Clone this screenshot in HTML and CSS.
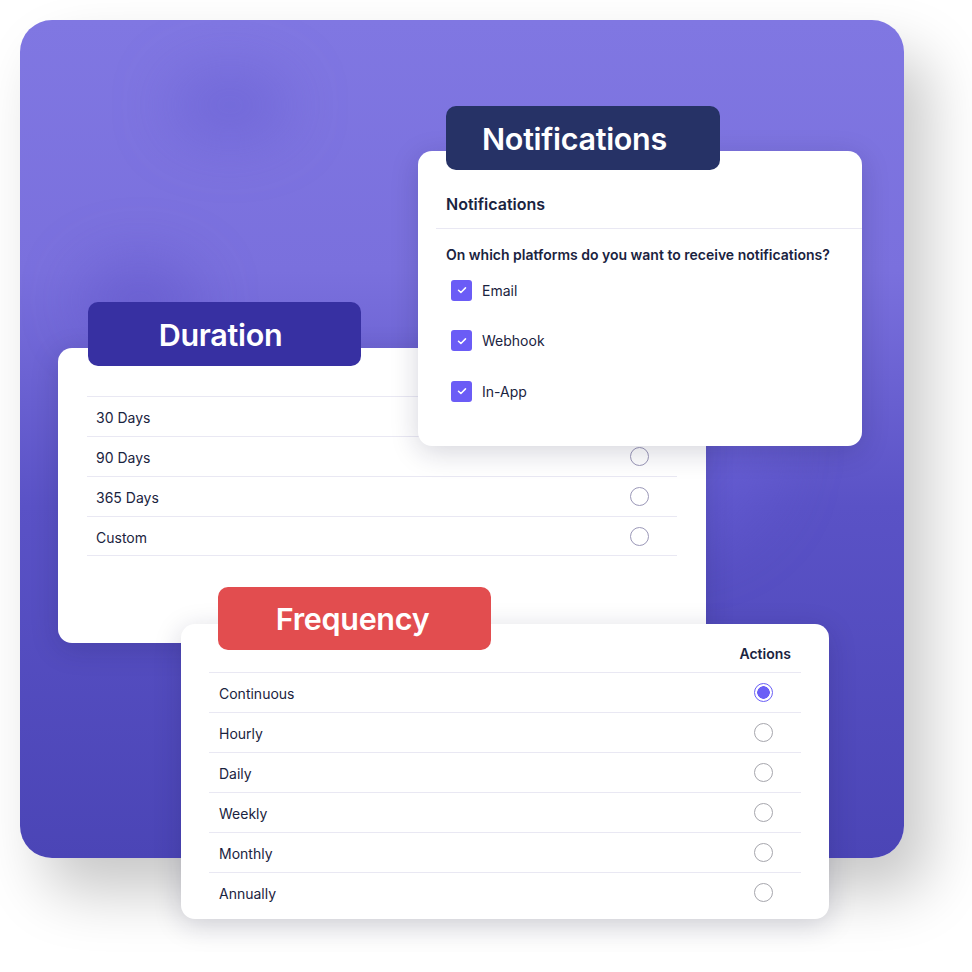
FILE: index.html
```html
<!DOCTYPE html>
<html>
<head>
<meta charset="utf-8">
<link rel="stylesheet" href="styles.css">
</head>
<body>
<div class="canvas">
  <div class="panel">
    <div class="blob b1"></div>
    <div class="blob b2"></div>
    <div class="blob b3"></div>
  </div>

  <div class="card card-duration">
    <div class="table">
      <div class="row"><span>30 Days</span><span class="radio"></span></div>
      <div class="row"><span>90 Days</span><span class="radio"></span></div>
      <div class="row"><span>365 Days</span><span class="radio"></span></div>
      <div class="row"><span>Custom</span><span class="radio"></span></div>
    </div>
  </div>
  <div class="tag tag-duration">Duration</div>

  <div class="card card-notif">
    <div class="notif-head">Notifications</div>
    <div class="notif-body">
      <div class="question">On which platforms do you want to receive notifications?</div>
      <div class="check-row"><span class="check"><svg viewBox="0 0 20 20" width="20" height="20"><path d="M6.5 10.2l2.4 2.3 4.6-4.6" fill="none" stroke="#fff" stroke-width="1.5" stroke-linecap="round" stroke-linejoin="round"/></svg></span><span>Email</span></div>
      <div class="check-row"><span class="check"><svg viewBox="0 0 20 20" width="20" height="20"><path d="M6.5 10.2l2.4 2.3 4.6-4.6" fill="none" stroke="#fff" stroke-width="1.5" stroke-linecap="round" stroke-linejoin="round"/></svg></span><span>Webhook</span></div>
      <div class="check-row"><span class="check"><svg viewBox="0 0 20 20" width="20" height="20"><path d="M6.5 10.2l2.4 2.3 4.6-4.6" fill="none" stroke="#fff" stroke-width="1.5" stroke-linecap="round" stroke-linejoin="round"/></svg></span><span>In-App</span></div>
    </div>
  </div>
  <div class="tag tag-notif">Notifications</div>

  <div class="card card-freq">
    <div class="table">
      <div class="thead"><span>Actions</span></div>
      <div class="row"><span>Continuous</span><span class="radio on"></span></div>
      <div class="row"><span>Hourly</span><span class="radio grey"></span></div>
      <div class="row"><span>Daily</span><span class="radio grey"></span></div>
      <div class="row"><span>Weekly</span><span class="radio grey"></span></div>
      <div class="row"><span>Monthly</span><span class="radio grey"></span></div>
      <div class="row"><span>Annually</span><span class="radio grey"></span></div>
    </div>
  </div>
  <div class="tag tag-freq">Frequency</div>
</div>
</body>
</html>
```

FILE: styles.css
```css
* { box-sizing: border-box; }
html, body { margin: 0; padding: 0; background: #fff; }
body { font-family: "Inter", "Lato", "Noto Sans", sans-serif; color: #1a2340; }

.canvas { position: relative; width: 972px; height: 972px; overflow: hidden; }

.panel {
  position: absolute; left: 20px; top: 20px; width: 884px; height: 838px;
  border-radius: 32px; overflow: hidden;
  background: linear-gradient(180deg, #8077e2 0%, #7a70dd 30%, #5a52c6 58%, #4b45b6 100%);
  box-shadow: 24px 34px 60px rgba(0,0,0,0.22);
}
.blob { position: absolute; border-radius: 50%; filter: blur(30px); }
.b1 { left: 150px; top: 50px; width: 120px; height: 70px; background: rgba(90,80,200,0.35); }
.b2 { left: 60px; top: 240px; width: 120px; height: 80px; background: rgba(80,70,190,0.35); }
.b3 { left: 560px; top: 330px; width: 200px; height: 200px; background: rgba(110,100,220,0.35); }

.card {
  position: absolute; background: #fff; border-radius: 14px;
  box-shadow: 0 6px 28px rgba(20,20,60,0.18);
}
.tag {
  position: absolute; height: 64px; width: 274px; border-radius: 10px;
  color: #fff; font-size: 30.5px; font-weight: 600; letter-spacing: -0.3px;
  display: flex; align-items: center; justify-content: center;
}
.tag-notif { left: 446px; top: 106px; background: #263266; justify-content: flex-start; padding-left: 36px; }
.tag-duration { left: 88px; top: 302px; background: #3730a2; width: 273px; padding-right: 8px; }
.tag-freq { left: 218px; top: 587px; background: #e24d4f; width: 273px; height: 63px; padding-right: 4px; }

.card-duration { left: 58px; top: 348px; width: 648px; height: 295px; padding: 48px 29px 0 29px; }
.card-freq { left: 181px; top: 624px; width: 648px; height: 295px; padding: 18px 28px 0 28px; }
.card-notif { left: 418px; top: 151px; width: 444px; height: 295px; }

.table { display: flex; flex-direction: column; }
.row {
  display: flex; align-items: center; justify-content: space-between;
  height: 40px; border-top: 1.5px solid #e9e8f3; padding: 2px 28px 0 9px;
  font-size: 14px; font-weight: 400;
}
.card-freq .row { padding: 2px 28px 0 10px; }
.card-duration .row:last-child { border-bottom: 1.5px solid #e9e8f3; }
.thead {
  display: flex; justify-content: flex-end; height: 30px; align-items: flex-start;
  font-size: 14px; font-weight: 600; padding: 3px 10px 0 0;
}
.radio {
  width: 19px; height: 19px; border-radius: 50%;
  border: 1.5px solid #9b98b8; background: #fff; flex: none;
}
.card-duration .radio, .card-freq .radio { margin-top: -2px; }
.radio.grey { border-color: #a6a6ad; }
.radio.on { border-color: #6a5ff6; background: radial-gradient(circle, #6a5ff6 0 6px, #fff 6.5px); }

.notif-head {
  height: 78px; padding: 43px 0 0 10px; margin-left: 18px;
  border-bottom: 1.5px solid #e9e8f3;
  font-size: 16px; font-weight: 600; line-height: 20px;
}
.notif-body { padding: 16px 0 0 28px; }
.question { font-size: 14px; font-weight: 600; line-height: 20px; margin-bottom: 0; }
.check-row {
  display: flex; align-items: center; gap: 10px; height: 50.5px;
  padding-left: 5px; font-size: 14px;
}
.check-row:first-of-type { margin-top: -4px; }
.check {
  width: 21px; height: 21px; border-radius: 3px; background: #6b5cf6;
  display: flex; align-items: center; justify-content: center; flex: none;
}
.check svg { display: block; }
```
